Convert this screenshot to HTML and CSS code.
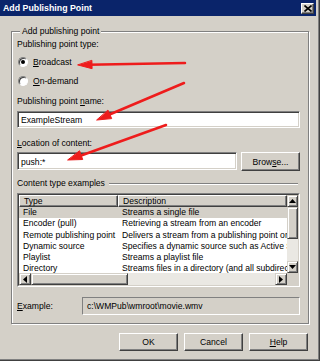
FILE: index.html
```html
<!DOCTYPE html>
<html>
  <head>
    <meta charset="UTF-8" />
    <title>Add Publishing Point</title>
    <link rel="stylesheet" href="styles.css">
  </head>

  <body>
    <div class="window">
      <div class="titlebar">
        <span class="titlebar__text">Add Publishing Point</span>
        <span class="titlebar__close">
          <svg width="8" height="7" viewBox="0 0 8 7">
            <path d="M0.5 0.5 L7.5 6.5 M7.5 0.5 L0.5 6.5" stroke="#000" stroke-width="1.6" />
          </svg>
        </span>
      </div>

      <div class="dialog">
        <fieldset class="group">
          <legend class="group__legend">Add publishing point</legend>

          <div class="label label--type">Publishing point type:</div>
          <div class="radio radio--first">
            <span class="radio__box radio__box--checked"></span>
            <span><u>B</u>roadcast</span>
          </div>
          <div class="radio radio--second">
            <span class="radio__box"></span>
            <span><u>O</u>n-demand</span>
          </div>

          <div class="label label--name">Publishing point <u>n</u>ame:</div>
          <div class="textbox textbox--name">ExampleStream</div>

          <div class="label label--location"><u>L</u>ocation of content:</div>
          <div class="path-row">
            <div class="textbox textbox--path">push:*</div>
            <div class="button button--browse">Brow<u>s</u>e...</div>
          </div>

          <div class="section-title">
            <span>Content type examples</span>
            <span class="section-title__line"></span>
          </div>

          <div class="listview">
            <div class="listview__main">
              <div class="listview__header">
                <div class="listview__col listview__col--type">Type</div>
                <div class="listview__col listview__col--desc">Description</div>
              </div>
              <div class="listview__row listview__row--selected">
                <span class="listview__cell listview__cell--type">File</span>
                <span class="listview__cell">Streams a single file</span>
              </div>
              <div class="listview__row">
                <span class="listview__cell listview__cell--type">Encoder (pull)</span>
                <span class="listview__cell">Retrieving a stream from an encoder</span>
              </div>
              <div class="listview__row">
                <span class="listview__cell listview__cell--type">Remote publishing point</span>
                <span class="listview__cell">Delivers a stream from a publishing point on another server</span>
              </div>
              <div class="listview__row">
                <span class="listview__cell listview__cell--type">Dynamic source</span>
                <span class="listview__cell">Specifies a dynamic source such as Active Server Pages</span>
              </div>
              <div class="listview__row">
                <span class="listview__cell listview__cell--type">Playlist</span>
                <span class="listview__cell">Streams a playlist file</span>
              </div>
              <div class="listview__row">
                <span class="listview__cell listview__cell--type">Directory</span>
                <span class="listview__cell">Streams files in a directory (and all subdirectories)</span>
              </div>
            </div>

            <div class="scroll scroll--v">
              <div class="scroll__btn scroll__btn--v">
                <svg width="7" height="4" viewBox="0 0 7 4"><polygon points="3.5,0 7,4 0,4" /></svg>
              </div>
              <div class="scroll__thumb scroll__thumb--v"></div>
              <div class="scroll__track"></div>
              <div class="scroll__btn scroll__btn--v">
                <svg width="7" height="4" viewBox="0 0 7 4"><polygon points="0,0 7,0 3.5,4" /></svg>
              </div>
            </div>

            <div class="scroll scroll--h">
              <div class="scroll__btn scroll__btn--h">
                <svg width="4" height="7" viewBox="0 0 4 7"><polygon points="0,3.5 4,0 4,7" /></svg>
              </div>
              <div class="scroll__thumb scroll__thumb--h"></div>
              <div class="scroll__track"></div>
              <div class="scroll__btn scroll__btn--h">
                <svg width="4" height="7" viewBox="0 0 4 7"><polygon points="0,0 4,3.5 0,7" /></svg>
              </div>
            </div>

            <div class="listview__corner"></div>
          </div>

          <div class="example-row">
            <div class="example-row__label"><u>E</u>xample:</div>
            <div class="example-row__box">c:\WMPub\wmroot\movie.wmv</div>
          </div>
        </fieldset>

        <div class="buttons">
          <div class="button">OK</div>
          <div class="button">Cancel</div>
          <div class="button"><u>H</u>elp</div>
        </div>
      </div>

      <svg class="arrows" width="320" height="361" viewBox="0 0 320 361">
        <g stroke="#ee1c1c" stroke-width="2.5" stroke-linecap="round" fill="#ee1c1c">
          <line x1="185" y1="63" x2="88" y2="64.8" />
          <polygon points="78,65 92.1,68.7 91.9,60.7" stroke-width="1" />
          <line x1="184" y1="83" x2="106" y2="116" />
          <polygon points="97,120 111.7,118.6 108.1,110.4" stroke-width="1" />
          <line x1="166" y1="125" x2="77" y2="157" />
          <polygon points="68,160 82.7,159.5 79.7,151.1" stroke-width="1" />
        </g>
      </svg>
    </div>
  </body>
</html>
```

FILE: styles.css
```css
:root {
  --color-face: #d4d0c8;
  --color-light: #ffffff;
  --color-shadow: #808080;
  --color-dark: #404040;
  --color-title: #0a246a;
  --color-track: #eae8e3;
  --color-text: #000000;
  --color-arrow: #ee1c1c;
}

* {
  box-sizing: border-box;
  margin: 0;
  padding: 0;
}

html,
body {
  width: 320px;
  height: 361px;
  overflow: hidden;
}

body {
  background-color: var(--color-face);
  font-family: "Liberation Sans", Arial, sans-serif;
  font-size: 8.6px;
  color: var(--color-text);
}

u {
  text-decoration: underline;
  text-underline-offset: 1px;
}

.window {
  position: relative;
  width: 320px;
  height: 361px;
  background-color: var(--color-face);
  box-shadow: inset -1px -1px 0 var(--color-dark), inset -2px -2px 0 var(--color-shadow);
}

/* title bar */

.titlebar {
  display: flex;
  align-items: center;
  justify-content: space-between;
  height: 16px;
  margin-right: 4px;
  padding: 0 2px 0 3px;
  background-color: var(--color-title);
}

.titlebar__text {
  color: var(--color-light);
  font-weight: bold;
  font-size: 8.8px;
}

.titlebar__close {
  display: flex;
  align-items: center;
  justify-content: center;
  width: 13px;
  height: 11px;
  background-color: var(--color-face);
  border: 1px solid;
  border-color: var(--color-light) var(--color-dark) var(--color-dark) var(--color-light);
  box-shadow: inset -1px -1px 0 var(--color-shadow);
}

/* dialog body */

.dialog {
  padding: 10px 11px 0 11px;
}

.group {
  border: 1px solid var(--color-shadow);
  box-shadow: inset 1px 1px 0 var(--color-light), 1px 1px 0 var(--color-light);
  padding: 0 8px 8px 5px;
  min-width: 0;
}

.group__legend {
  margin-left: 3px;
  padding: 0 2px;
  line-height: 10px;
  height: 10px;
  background-color: var(--color-face);
}

.label {
  line-height: 11px;
  height: 11px;
}

.label--type {
  margin-top: 3px;
}

.label--name {
  margin-top: 9px;
}

.label--location {
  margin-top: 10px;
}

.radio {
  display: flex;
  align-items: center;
  gap: 5px;
  height: 12px;
  padding-left: 1px;
}

.radio--first {
  margin-top: 6px;
}

.radio--second {
  margin-top: 7px;
}

.radio__box {
  position: relative;
  width: 10px;
  height: 10px;
  border-radius: 50%;
  border: 1px solid;
  border-color: var(--color-shadow) var(--color-light) var(--color-light) var(--color-shadow);
  background-color: var(--color-light);
  box-shadow: inset 1px 1px 0 var(--color-dark);
}

.radio__box--checked::after {
  content: "";
  position: absolute;
  width: 4px;
  height: 4px;
  left: 2px;
  top: 2px;
  border-radius: 50%;
  background-color: var(--color-text);
}

/* inputs */

.textbox {
  height: 17px;
  line-height: 13px;
  padding: 2px 3px;
  background-color: var(--color-light);
  border: 1px solid;
  border-color: var(--color-shadow) var(--color-light) var(--color-light) var(--color-shadow);
  box-shadow: inset 1px 1px 0 var(--color-dark), inset -1px -1px 0 var(--color-face);
}

.textbox--name {
  margin-top: 4px;
}

.path-row {
  display: flex;
  gap: 4px;
  margin-top: 3px;
  height: 19px;
}

.textbox--path {
  width: 220px;
  height: 18px;
  line-height: 14px;
}

.button {
  display: flex;
  align-items: center;
  justify-content: center;
  width: 59px;
  height: 18px;
  background-color: var(--color-face);
  border: 1px solid;
  border-color: var(--color-light) var(--color-dark) var(--color-dark) var(--color-light);
  box-shadow: inset -1px -1px 0 var(--color-shadow);
}

.button--browse {
  flex: 1;
  height: 19px;
}

.section-title {
  display: flex;
  align-items: center;
  gap: 4px;
  margin-top: 7px;
  height: 11px;
  line-height: 11px;
}

.section-title__line {
  flex: 1;
  height: 2px;
  border-top: 1px solid var(--color-shadow);
  border-bottom: 1px solid var(--color-light);
  margin-right: 2px;
}

/* list view */

.listview {
  display: grid;
  grid-template-columns: 268px 11px;
  grid-template-rows: 78px 12px;
  margin-top: 4px;
  border: 2px solid;
  border-color: var(--color-shadow) var(--color-light) var(--color-light) var(--color-shadow);
  background-color: var(--color-light);
  position: relative;
}

.listview::before {
  content: "";
  position: absolute;
  inset: -1px;
  border: 1px solid;
  border-color: var(--color-dark) var(--color-face) var(--color-face) var(--color-dark);
  pointer-events: none;
}

.listview__main {
  overflow: hidden;
}

.listview__header {
  display: flex;
  height: 12px;
}

.listview__col {
  height: 12px;
  line-height: 10px;
  padding-left: 4px;
  background-color: var(--color-face);
  border: 1px solid;
  border-color: var(--color-light) var(--color-dark) var(--color-dark) var(--color-light);
  box-shadow: inset -1px -1px 0 var(--color-shadow);
}

.listview__col--type {
  width: 99px;
}

.listview__col--desc {
  width: 169px;
}

.listview__row {
  display: flex;
  height: 11.3px;
  line-height: 11.3px;
  white-space: nowrap;
}

.listview__row--selected {
  background-color: var(--color-face);
}

.listview__cell {
  padding-left: 4px;
  overflow: hidden;
  width: 169px;
}

.listview__cell--type {
  width: 99px;
}

/* scrollbars */

.scroll {
  display: flex;
  background-color: var(--color-track);
}

.scroll--v {
  flex-direction: column;
}

.scroll__btn,
.scroll__thumb {
  display: flex;
  align-items: center;
  justify-content: center;
  background-color: var(--color-face);
  border: 1px solid;
  border-color: var(--color-face) var(--color-dark) var(--color-dark) var(--color-face);
  box-shadow: inset 1px 1px 0 var(--color-light), inset -1px -1px 0 var(--color-shadow);
}

.scroll__btn--v {
  height: 12px;
}

.scroll__btn--h {
  width: 12px;
}

.scroll__thumb--v {
  height: 32px;
}

.scroll__thumb--h {
  width: 97px;
}

.scroll__track {
  flex: 1;
}

.listview__corner {
  background-color: var(--color-face);
}

/* example */

.example-row {
  display: flex;
  align-items: center;
  margin-top: 10px;
}

.example-row__label {
  width: 65px;
}

.example-row__box {
  flex: 1;
  height: 18px;
  line-height: 16px;
  padding-left: 4px;
  border: 1px solid;
  border-color: var(--color-shadow) var(--color-light) var(--color-light) var(--color-shadow);
}

/* buttons */

.buttons {
  display: flex;
  justify-content: flex-end;
  gap: 6px;
  margin-top: 9px;
  padding-right: 1px;
}

/* red call-out arrows drawn over the dialog */

.arrows {
  position: absolute;
  left: 0;
  top: 0;
  pointer-events: none;
}
```
